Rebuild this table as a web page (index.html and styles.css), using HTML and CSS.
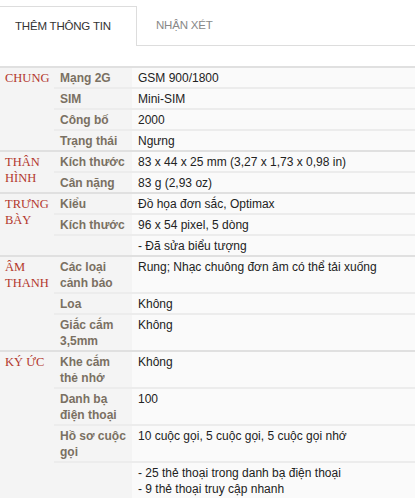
FILE: index.html
```html
<!DOCTYPE html>
<html lang="vi">
<head>
<meta charset="utf-8">
<link rel="stylesheet" href="styles.css">
</head>
<body>
<div class="tabs">
  <div class="tab active">THÊM THÔNG TIN</div>
  <div class="tab">NHẬN XÉT</div>
</div>
<div class="specs">
  <div class="section">
    <div class="cat">CHUNG</div>
    <div class="rows">
      <div class="row"><div class="label">Mạng 2G</div><div class="value">GSM 900/1800</div></div>
      <div class="row"><div class="label">SIM</div><div class="value">Mini-SIM</div></div>
      <div class="row"><div class="label">Công bố</div><div class="value">2000</div></div>
      <div class="row"><div class="label">Trạng thái</div><div class="value">Ngưng</div></div>
    </div>
  </div>
  <div class="section">
    <div class="cat">THÂN HÌNH</div>
    <div class="rows">
      <div class="row"><div class="label">Kích thước</div><div class="value">83 x 44 x 25 mm (3,27 x 1,73 x 0,98 in)</div></div>
      <div class="row"><div class="label">Cân nặng</div><div class="value">83 g (2,93 oz)</div></div>
    </div>
  </div>
  <div class="section">
    <div class="cat">TRƯNG BÀY</div>
    <div class="rows">
      <div class="row"><div class="label">Kiểu</div><div class="value">Đồ họa đơn sắc, Optimax</div></div>
      <div class="row"><div class="label">Kích thước</div><div class="value">96 x 54 pixel, 5 dòng</div></div>
      <div class="row"><div class="label"></div><div class="value">- Đã sửa biểu tượng</div></div>
    </div>
  </div>
  <div class="section">
    <div class="cat">ÂM THANH</div>
    <div class="rows">
      <div class="row"><div class="label">Các loại cảnh báo</div><div class="value">Rung; Nhạc chuông đơn âm có thể tải xuống</div></div>
      <div class="row"><div class="label">Loa</div><div class="value">Không</div></div>
      <div class="row"><div class="label">Giắc cắm 3,5mm</div><div class="value">Không</div></div>
    </div>
  </div>
  <div class="section">
    <div class="cat">KÝ ỨC</div>
    <div class="rows">
      <div class="row"><div class="label">Khe cắm thẻ nhớ</div><div class="value">Không</div></div>
      <div class="row"><div class="label">Danh bạ điện thoại</div><div class="value">100</div></div>
      <div class="row"><div class="label">Hồ sơ cuộc gọi</div><div class="value">10 cuộc gọi, 5 cuộc gọi, 5 cuộc gọi nhớ</div></div>
      <div class="row"><div class="label"></div><div class="value">- 25 thẻ thoại trong danh bạ điện thoại<br>- 9 thẻ thoại truy cập nhanh</div></div>
    </div>
  </div>
</div>
</body>
</html>
```

FILE: styles.css
```css
*, *::before, *::after {
  box-sizing: border-box;
}
html, body {
  margin: 0;
  padding: 0;
  background: #fff;
}
body {
  font-family: "Liberation Sans", Arial, sans-serif;
  font-size: 12px;
  color: #222;
}
.tabs {
  display: flex;
  padding-top: 6px;
}
.tab {
  height: 40px;
  display: flex;
  align-items: center;
  padding-bottom: 2px;
  font-size: 11.5px;
  letter-spacing: -0.2px;
  color: #888;
  border-bottom: 1px solid #ddd;
  flex: 1;
  padding-left: 19px;
}
.tab.active {
  flex: 0 0 auto;
  width: 137px;
  padding-left: 15px;
  color: #333;
  border: 1px solid #ddd;
  border-left: none;
  border-bottom: none;
}
.specs {
  margin-top: 20px;
}
.section {
  display: flex;
  border-top: 2px solid #e0e0e0;
  background: #f4f4f4;
}
.cat {
  width: 54px;
  padding: 2px 0 0 5px;
  font-family: "Liberation Serif", "Times New Roman", serif;
  font-size: 12.5px;
  line-height: 16px;
  color: #b3372c;
}
.rows {
  flex: 1;
}
.row {
  display: flex;
  border-top: 2px solid #ececec;
}
.row:first-child {
  border-top: none;
}
.label {
  width: 78px;
  padding: 2px 4px 1px 6px;
  font-weight: bold;
  color: #7a7062;
  line-height: 16px;
}
.value {
  flex: 1;
  padding: 2px 6px 1px 6px;
  line-height: 16px;
  background: #fafafa;
}
```
